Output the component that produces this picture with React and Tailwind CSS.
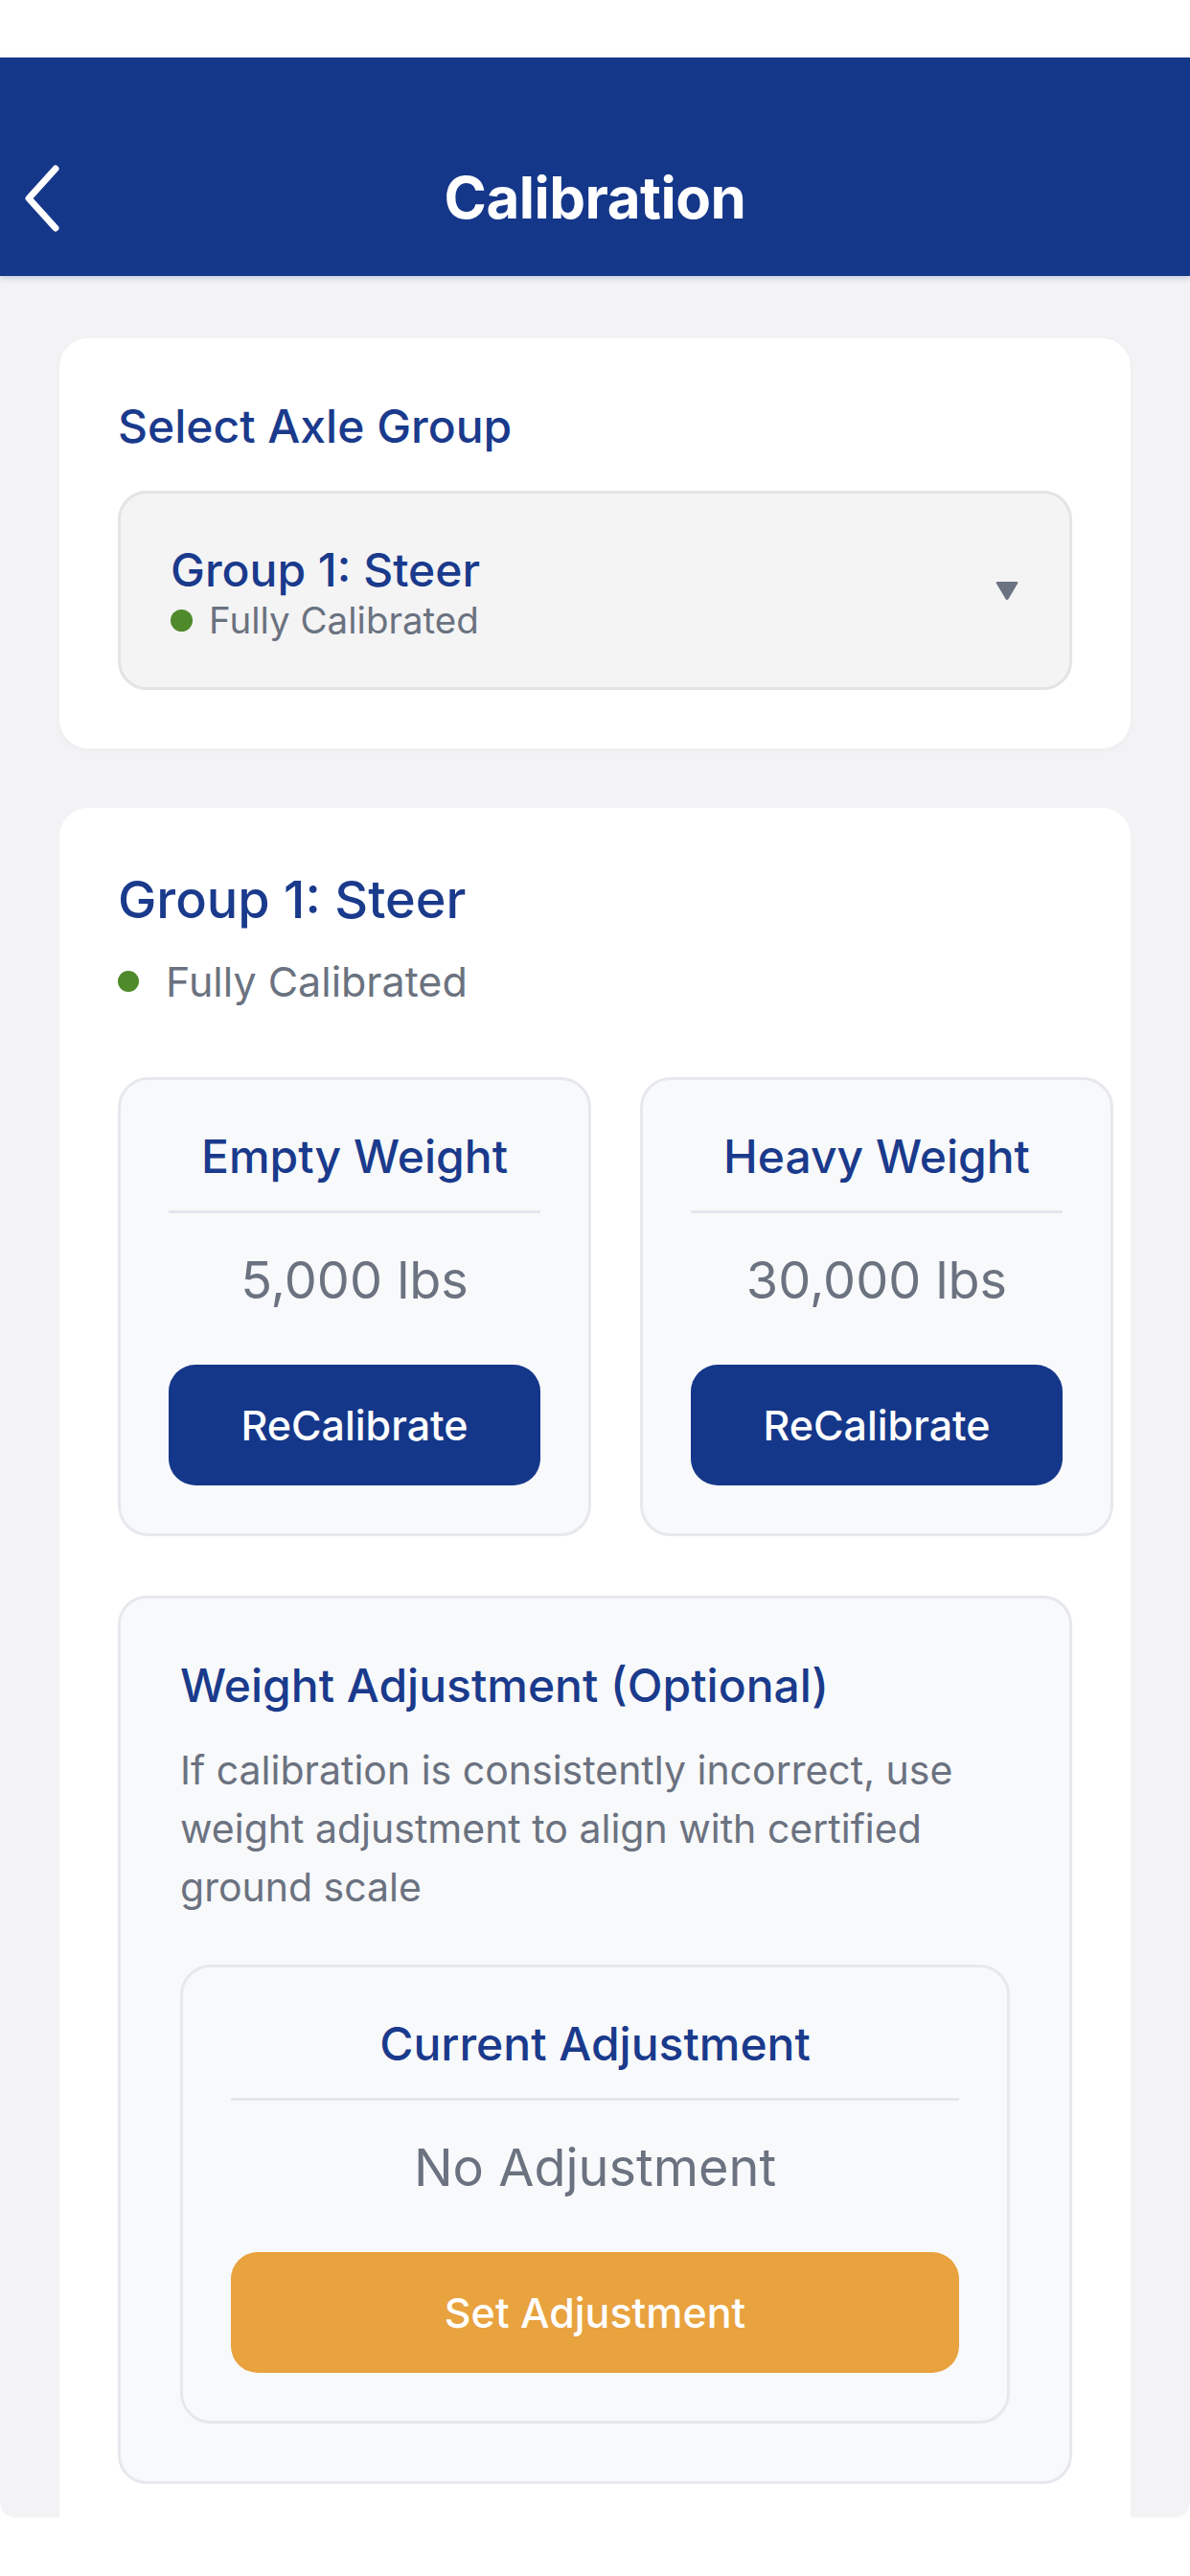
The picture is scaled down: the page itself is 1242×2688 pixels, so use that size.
import React from 'react';

const navy = 'text-[#1a3a8c]';

const StatusDot = ({ size }) => (
  <span className={`${size} rounded-full bg-[#4f8a2b] shrink-0`} />
);

const WeightBox = ({ title, value, action, width, tone }) => (
  <div className={`${width} shrink-0 bg-[#f8f9fb] border-[3px] border-[#e6e8ed] rounded-[32px] px-[50px] pt-[52px] pb-[50px] flex flex-col items-center`}>
    <div className={`text-[48px] leading-[56px] font-medium ${navy}`}>{title}</div>
    <div className="w-full h-[3px] bg-[#e3e6ec] mt-[28px]" />
    <div className="text-[54px] leading-[64px] text-[#6b7280] mt-[38px]">{value}</div>
    <button
      className={`w-full h-[126px] mt-[56px] rounded-[28px] text-white text-[43px] font-medium ${tone}`}
    >
      {action}
    </button>
  </div>
);

export default function App() {
  return (
    <div className="w-[1242px] h-[2688px] bg-white font-['Inter','Noto_Sans',sans-serif] overflow-hidden">
      <div className="h-[60px] bg-white" />

      <header className="relative z-10 h-[228px] bg-[#15378a] pt-[100px] shadow-[0_3px_6px_rgba(21,55,138,0.18)]">
        <div className="relative h-[92px] flex items-center justify-center">
          <button className="absolute left-[22px] top-[10px]">
            <svg width="44" height="72" viewBox="0 0 44 72" fill="none">
              <polyline
                points="36,6 8,37 36,68"
                stroke="white"
                strokeWidth="7"
                strokeLinecap="round"
                strokeLinejoin="round"
              />
            </svg>
          </button>
          <h1 className="text-[60px] leading-[72px] font-bold text-white tracking-[-0.5px]">Calibration</h1>
        </div>
      </header>

      <main className="h-[2339px] bg-[#f3f3f5] rounded-b-[16px] overflow-hidden px-[62px] pt-[65px] flex flex-col gap-[62px]">
        {/* axle group selector */}
        <section className="bg-white rounded-[30px] px-[61px] pt-[63px] pb-[61px] shadow-[0_2px_6px_rgba(0,0,0,0.03)]">
          <div className={`text-[48px] leading-[58px] font-medium ${navy}`}>Select Axle Group</div>
          <div className="mt-[38px] h-[208px] bg-[#f4f4f5] border-[3px] border-[#e4e4e7] rounded-[30px] pl-[52px] pr-[52px] flex items-center justify-between">
            <div className="flex flex-col pt-[6px]">
              <div className={`text-[48px] leading-[56px] font-medium ${navy}`}>Group 1: Steer</div>
              <div className="flex items-center gap-[17px]">
                <StatusDot size="w-[23px] h-[23px]" />
                <span className="text-[38.5px] leading-[48px] text-[#6b7280]">Fully Calibrated</span>
              </div>
            </div>
            <svg width="26" height="26" viewBox="0 0 26 26">
              <path
                d="M3 4 L23 4 Q25 4 24 6 L14.5 22 Q13 24 11.5 22 L2 6 Q1 4 3 4 Z"
                fill="#6b7280"
              />
            </svg>
          </div>
        </section>

        {/* group detail */}
        <section className="bg-white rounded-t-[30px] px-[61px] pt-[64px] pb-[80px]">
          <div className={`text-[54px] leading-[64px] font-medium ${navy}`}>Group 1: Steer</div>
          <div className="mt-[28px] flex items-center gap-[28px]">
            <StatusDot size="w-[22px] h-[22px]" />
            <span className="text-[43px] leading-[50px] text-[#6b7280]">Fully Calibrated</span>
          </div>

          <div className="mt-[75px] flex gap-[51px]">
            <WeightBox title="Empty Weight" value="5,000 lbs" action="ReCalibrate" width="w-[494px]" tone="bg-[#15378a]" />
            <WeightBox title="Heavy Weight" value="30,000 lbs" action="ReCalibrate" width="w-[494px]" tone="bg-[#15378a]" />
          </div>

          <div className="mt-[62px] w-[996px] bg-[#f8f9fb] border-[3px] border-[#e6e8ed] rounded-[30px] px-[62px] pt-[63px] pb-[60px]">
            <div className={`text-[48px] leading-[56px] font-medium ${navy}`}>Weight Adjustment (Optional)</div>
            <p className="mt-[30px] text-[41px] leading-[61px] text-[#6b7280]">
              If calibration is consistently incorrect, use weight adjustment to align with certified ground scale
            </p>
            <div className="mt-[50px]">
              <WeightBox
                title="Current Adjustment"
                value="No Adjustment"
                action="Set Adjustment"
                width="w-full"
                tone="bg-[#e8a23e]"
              />
            </div>
          </div>
        </section>
      </main>
    </div>
  );
}
